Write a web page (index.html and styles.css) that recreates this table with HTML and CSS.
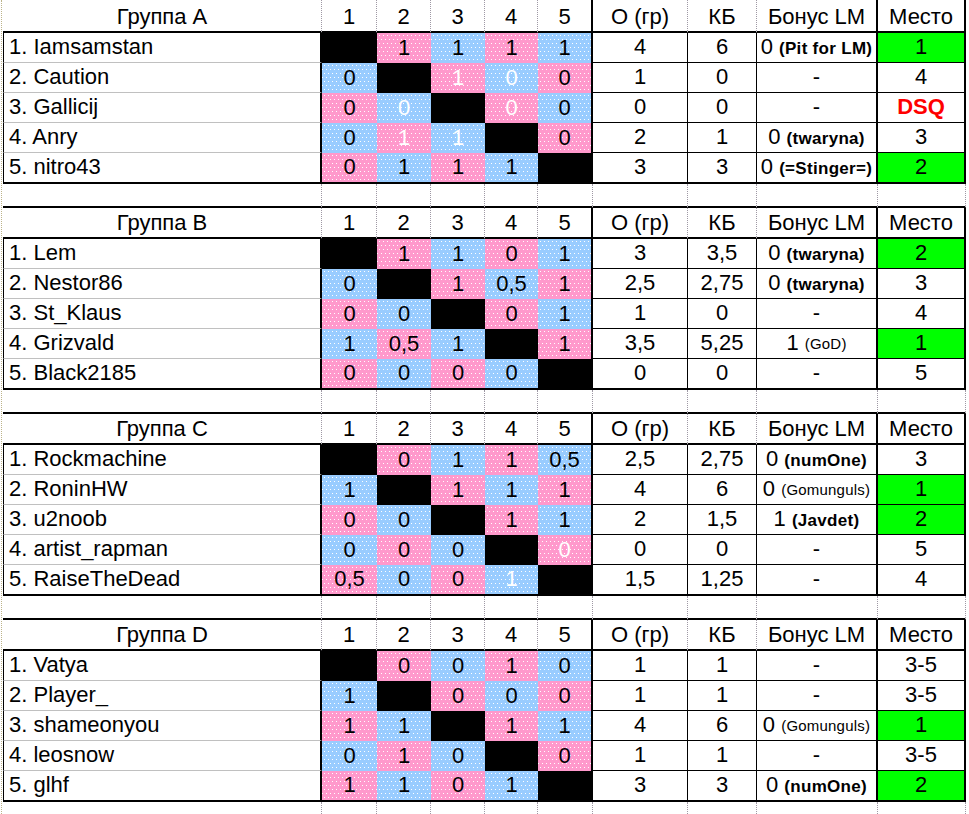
FILE: index.html
```html
<!DOCTYPE html>
<html lang="ru">
<head>
<meta charset="utf-8">
<title>Группы</title>
<link rel="stylesheet" href="styles.css">
</head>
<body>
<div class="page">
  <!-- Group A -->
  <div class="grp first">
    <div class="c h">Группа A</div>
    <div class="c h">1</div><div class="c h">2</div><div class="c h">3</div><div class="c h">4</div><div class="c h e">5</div>
    <div class="c h">О (гр)</div><div class="c h">КБ</div><div class="c h bk">Бонус LM</div><div class="c h bk">Место</div>

    <div class="c n">1. Iamsamstan</div>
    <div class="c x"></div><div class="c p">1</div><div class="c b">1</div><div class="c p">1</div><div class="c b e">1</div>
    <div class="c s">4</div><div class="c s">6</div><div class="c s bk">0&nbsp;<span class="note">(Pit for LM)</span></div><div class="c s bk g">1</div>

    <div class="c n">2. Caution</div>
    <div class="c b">0</div><div class="c x"></div><div class="c p w">1</div><div class="c b w">0</div><div class="c p e">0</div>
    <div class="c s">1</div><div class="c s">0</div><div class="c s bk">-</div><div class="c s bk">4</div>

    <div class="c n">3. Gallicij</div>
    <div class="c p">0</div><div class="c b w">0</div><div class="c x"></div><div class="c p w">0</div><div class="c b e">0</div>
    <div class="c s">0</div><div class="c s">0</div><div class="c s bk">-</div><div class="c s bk dsq">DSQ</div>

    <div class="c n">4. Anry</div>
    <div class="c b">0</div><div class="c p w">1</div><div class="c b w">1</div><div class="c x"></div><div class="c p e">0</div>
    <div class="c s">2</div><div class="c s">1</div><div class="c s bk">0&nbsp;<span class="note">(twaryna)</span></div><div class="c s bk">3</div>

    <div class="c n l">5. nitro43</div>
    <div class="c p l">0</div><div class="c b l">1</div><div class="c p l">1</div><div class="c b l">1</div><div class="c x e l"></div>
    <div class="c s l">3</div><div class="c s l">3</div><div class="c s bk l">0&nbsp;<span class="note">(=Stinger=)</span></div><div class="c s bk g l">2</div>
  </div>

  <div class="gap"><div></div><div></div><div></div><div></div><div></div><div></div><div></div><div></div><div></div><div></div></div>

  <!-- Group B -->
  <div class="grp">
    <div class="c h">Группа B</div>
    <div class="c h">1</div><div class="c h">2</div><div class="c h">3</div><div class="c h">4</div><div class="c h e">5</div>
    <div class="c h">О (гр)</div><div class="c h">КБ</div><div class="c h bk">Бонус LM</div><div class="c h bk">Место</div>

    <div class="c n">1. Lem</div>
    <div class="c x"></div><div class="c p">1</div><div class="c b">1</div><div class="c p">0</div><div class="c b e">1</div>
    <div class="c s">3</div><div class="c s">3,5</div><div class="c s bk">0&nbsp;<span class="note">(twaryna)</span></div><div class="c s bk g">2</div>

    <div class="c n">2. Nestor86</div>
    <div class="c b">0</div><div class="c x"></div><div class="c p">1</div><div class="c b">0,5</div><div class="c p e">1</div>
    <div class="c s">2,5</div><div class="c s">2,75</div><div class="c s bk">0&nbsp;<span class="note">(twaryna)</span></div><div class="c s bk">3</div>

    <div class="c n">3. St_Klaus</div>
    <div class="c p">0</div><div class="c b">0</div><div class="c x"></div><div class="c p">0</div><div class="c b e">1</div>
    <div class="c s">1</div><div class="c s">0</div><div class="c s bk">-</div><div class="c s bk">4</div>

    <div class="c n">4. Grizvald</div>
    <div class="c b">1</div><div class="c p">0,5</div><div class="c b">1</div><div class="c x"></div><div class="c p e">1</div>
    <div class="c s">3,5</div><div class="c s">5,25</div><div class="c s bk">1&nbsp;<span class="note thin">(GoD)</span></div><div class="c s bk g">1</div>

    <div class="c n l">5. Black2185</div>
    <div class="c p l">0</div><div class="c b l">0</div><div class="c p l">0</div><div class="c b l">0</div><div class="c x e l"></div>
    <div class="c s l">0</div><div class="c s l">0</div><div class="c s bk l">-</div><div class="c s bk l">5</div>
  </div>

  <div class="gap"><div></div><div></div><div></div><div></div><div></div><div></div><div></div><div></div><div></div><div></div></div>

  <!-- Group C -->
  <div class="grp">
    <div class="c h">Группа C</div>
    <div class="c h">1</div><div class="c h">2</div><div class="c h">3</div><div class="c h">4</div><div class="c h e">5</div>
    <div class="c h">О (гр)</div><div class="c h">КБ</div><div class="c h bk">Бонус LM</div><div class="c h bk">Место</div>

    <div class="c n">1. Rockmachine</div>
    <div class="c x"></div><div class="c p">0</div><div class="c b">1</div><div class="c p">1</div><div class="c b e">0,5</div>
    <div class="c s">2,5</div><div class="c s">2,75</div><div class="c s bk">0&nbsp;<span class="note">(numOne)</span></div><div class="c s bk">3</div>

    <div class="c n">2. RoninHW</div>
    <div class="c b">1</div><div class="c x"></div><div class="c p">1</div><div class="c b">1</div><div class="c p e">1</div>
    <div class="c s">4</div><div class="c s">6</div><div class="c s bk">0&nbsp;<span class="note thin">(Gomunguls)</span></div><div class="c s bk g">1</div>

    <div class="c n">3. u2noob</div>
    <div class="c p">0</div><div class="c b">0</div><div class="c x"></div><div class="c p">1</div><div class="c b e">1</div>
    <div class="c s">2</div><div class="c s">1,5</div><div class="c s bk">1&nbsp;<span class="note">(Javdet)</span></div><div class="c s bk g">2</div>

    <div class="c n">4. artist_rapman</div>
    <div class="c b">0</div><div class="c p">0</div><div class="c b">0</div><div class="c x"></div><div class="c p e w">0</div>
    <div class="c s">0</div><div class="c s">0</div><div class="c s bk">-</div><div class="c s bk">5</div>

    <div class="c n l">5. RaiseTheDead</div>
    <div class="c p l">0,5</div><div class="c b l">0</div><div class="c p l">0</div><div class="c b l w">1</div><div class="c x e l"></div>
    <div class="c s l">1,5</div><div class="c s l">1,25</div><div class="c s bk l">-</div><div class="c s bk l">4</div>
  </div>

  <div class="gap"><div></div><div></div><div></div><div></div><div></div><div></div><div></div><div></div><div></div><div></div></div>

  <!-- Group D -->
  <div class="grp">
    <div class="c h">Группа D</div>
    <div class="c h">1</div><div class="c h">2</div><div class="c h">3</div><div class="c h">4</div><div class="c h e">5</div>
    <div class="c h">О (гр)</div><div class="c h">КБ</div><div class="c h bk">Бонус LM</div><div class="c h bk">Место</div>

    <div class="c n">1. Vatya</div>
    <div class="c x"></div><div class="c p">0</div><div class="c b">0</div><div class="c p">1</div><div class="c b e">0</div>
    <div class="c s">1</div><div class="c s">1</div><div class="c s bk">-</div><div class="c s bk">3-5</div>

    <div class="c n">2. Player_</div>
    <div class="c b">1</div><div class="c x"></div><div class="c p">0</div><div class="c b">0</div><div class="c p e">0</div>
    <div class="c s">1</div><div class="c s">1</div><div class="c s bk">-</div><div class="c s bk">3-5</div>

    <div class="c n">3. shameonyou</div>
    <div class="c p">1</div><div class="c b">1</div><div class="c x"></div><div class="c p">1</div><div class="c b e">1</div>
    <div class="c s">4</div><div class="c s">6</div><div class="c s bk">0&nbsp;<span class="note thin">(Gomunguls)</span></div><div class="c s bk g">1</div>

    <div class="c n">4. leosnow</div>
    <div class="c b">0</div><div class="c p">1</div><div class="c b">0</div><div class="c x"></div><div class="c p e">0</div>
    <div class="c s">1</div><div class="c s">1</div><div class="c s bk">-</div><div class="c s bk">3-5</div>

    <div class="c n l">5. glhf</div>
    <div class="c p l">1</div><div class="c b l">1</div><div class="c p l">0</div><div class="c b l">1</div><div class="c x e l"></div>
    <div class="c s l">3</div><div class="c s l">3</div><div class="c s bk l">0&nbsp;<span class="note">(numOne)</span></div><div class="c s bk g l">2</div>
  </div>

  <div class="gap tail"><div></div><div></div><div></div><div></div><div></div><div></div><div></div><div></div><div></div><div></div></div>
</div>
</body>
</html>
```
FILE: styles.css
```css
html, body {
  margin: 0;
  padding: 0;
  background: #fff;
  overflow: hidden;
}

body {
  font-family: "Liberation Sans", Arial, sans-serif;
  font-size: 22px;
  color: #000;
}

.page {
  margin-left: 1px;
  padding-left: 1px;
  border-left: 1px dotted #bdb48a;
  width: 963px;
  height: 814px;
}

.grp,
.gap {
  display: grid;
  grid-template-columns: 319px 55px 54px 54px 53px 55px 95px 69px 121px 88px;
}

.grp {
  grid-template-rows: 31px 30px 30px 30px 30px 31px;
}

.grp.first {
  grid-template-rows: 33px 30px 30px 30px 30px 31px;
}

.c {
  box-sizing: border-box;
  display: flex;
  align-items: center;
  justify-content: center;
  white-space: nowrap;
  line-height: 1.117;
}

/* header cells */
.h {
  align-items: flex-end;
  padding-bottom: 1px;
  border-right: 1px dotted #9e98a4;
  border-bottom: 2px solid #000;
}

.h.e,
.h.bk {
  border-right: 2px solid #000;
}

/* name cells */
.n {
  justify-content: flex-start;
  padding-left: 5px;
  border-left: 1px solid #000;
  border-right: 2px solid #000;
  border-bottom: 1px solid #c0c0c0;
}

/* result cells */
.p,
.b {
  background-image:
    conic-gradient(from 270deg at 1px 1px, #fff 25%, transparent 0),
    conic-gradient(from 270deg at 1px 1px, #fff 25%, transparent 0);
  background-size: 4px 8px, 4px 8px;
  background-position: 2px 2px, 0 6px;
}

.p {
  background-color: #ff99cc;
}

.b {
  background-color: #99ccff;
}

.x {
  background: #000;
}

.e {
  border-right: 2px solid #000;
}

.w {
  color: #fff;
}

/* stats */
.s {
  border-right: 1px solid #000;
  border-bottom: 1px solid #000;
}

.s.bk {
  border-right: 2px solid #000;
}

.g {
  background: #00ff00;
}

.dsq {
  color: #ff0000;
  font-weight: bold;
}

.note {
  font-size: 17px;
  font-weight: bold;
  letter-spacing: 0.3px;
  margin-top: 2px;
}

.note.thin {
  font-weight: normal;
  font-size: 15px;
  letter-spacing: 0.2px;
}

/* last row of each group */
.l {
  border-bottom: 2px solid #000;
}

/* empty spacer rows */
.gap {
  height: 24px;
}

.gap > div {
  box-sizing: border-box;
  border-right: 1px dotted #9e98a4;
  border-bottom: 2px solid #000;
}

.gap.tail {
  height: 12px;
}

.gap.tail > div {
  border-bottom: 0;
}
```
